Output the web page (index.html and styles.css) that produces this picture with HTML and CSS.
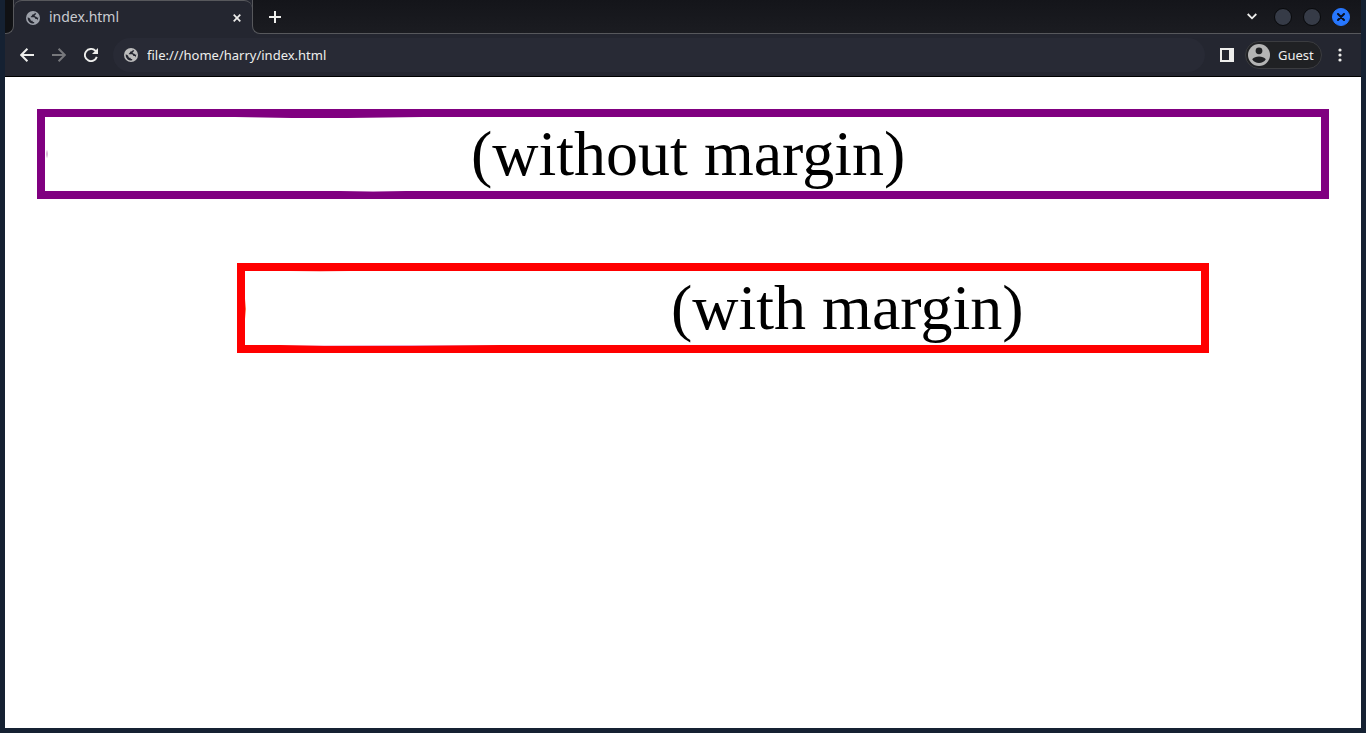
FILE: index.html
```html
<!DOCTYPE html>
<html lang="en">
<head>
<meta charset="utf-8">
<title>index.html</title>
<link rel="stylesheet" href="styles.css">
</head>
<body>
<svg class="defs" aria-hidden="true">
  <symbol id="globe" viewBox="0 0 14 14">
    <circle cx="7" cy="7" r="7" fill="currentColor"/>
    <path class="ocean" d="M8.6 1.7C8.9 2.5 8.5 3 7.8 3.2L6.6 3.5C5.9 3.8 6.2 4.6 5.6 4.9C5 5.2 4.7 5.4 4.8 6.2H7.8C8.9 6.2 9.2 7 9.3 7.9H10.6C11.4 8 11.4 9 10.8 9.9A5.4 5.4 0 0 0 12.4 6.6C11.7 6.9 10.8 6.6 10.4 5.8C9.2 5.9 8.5 5.1 8.8 4.1C9.8 4 9.9 3.2 10.2 2.6A5.4 5.4 0 0 0 8.6 1.7zM1.6 6.6A5.4 5.4 0 0 0 8.2 12.3V11C7.1 11.2 6.4 10.7 6.5 9.7H5.2C4.4 9.5 4.5 8.5 4.2 7.8C3.4 7 2.6 6.7 1.6 6.6z"/>
  </symbol>
</svg>
<div class="window">
  <header class="tabstrip">
    <div class="previous"></div>
    <div class="tab">
      <svg class="globe tab-globe"><use href="#globe"/></svg>
      <span class="tab-title">index.html</span>
      <button class="tab-close" aria-label="Close tab"><svg width="8" height="8" viewBox="0 0 8 8"><path d="M.7.7l6.6 6.6M7.3.7L.7 7.3" stroke="currentColor" stroke-width="1.7"/></svg></button>
    </div>
    <div class="strip-rest">
      <button class="new-tab" aria-label="New tab"><svg width="12" height="12" viewBox="0 0 12 12"><path d="M6 0v12M0 6h12" stroke="currentColor" stroke-width="2"/></svg></button>
      <button class="search-tabs" aria-label="Search tabs"><svg width="10" height="7" viewBox="0 0 10 7"><path d="M.7 1L5 5.3 9.3 1" fill="none" stroke="currentColor" stroke-width="1.8"/></svg></button>
      <button class="control" aria-label="Minimize"></button>
      <button class="control" aria-label="Maximize"></button>
      <button class="control close" aria-label="Close window"><svg width="8" height="8" viewBox="0 0 8 8"><path d="M1 1l6 6M7 1L1 7" stroke="currentColor" stroke-width="2" stroke-linecap="round"/></svg></button>
    </div>
  </header>
  <nav class="toolbar" aria-label="Browser toolbar">
    <button class="nav-button" aria-label="Back"><svg width="14" height="14" viewBox="0 0 14 14"><path d="M14 7H1.5M7.4.8L1.2 7l6.2 6.2" fill="none" stroke="currentColor" stroke-width="2"/></svg></button>
    <button class="nav-button disabled" aria-label="Forward"><svg width="14" height="14" viewBox="0 0 14 14"><path d="M0 7h12.5M6.6.8L12.8 7l-6.2 6.2" fill="none" stroke="currentColor" stroke-width="2"/></svg></button>
    <button class="nav-button" aria-label="Reload"><svg width="14" height="14" viewBox="0 0 14 14"><path d="M12.8 8.9A6.1 6.1 0 1 1 11.3 2.7L12 3.4" fill="none" stroke="currentColor" stroke-width="1.9"/><path d="M14 0v6H8z" fill="currentColor"/></svg></button>
    <label class="address"><svg class="globe"><use href="#globe"/></svg><input type="text" aria-label="Address" value="file:///home/harry/index.html"></label>
    <button class="side-panel" aria-label="Side panel"><svg width="14" height="14" viewBox="0 0 14 14"><path fill="currentColor" fill-rule="evenodd" d="M0 0h14v14H0zM2 2v10h7V2z"/></svg></button>
    <button class="profile"><svg width="22" height="22" viewBox="0 0 22 22"><circle cx="11" cy="11" r="11" fill="#b4b4b4"/><circle cx="11" cy="6.8" r="3.4" fill="#202124"/><path d="M4.2 15.3C5.7 13.4 8.3 12.5 11 12.5s5.3.9 6.8 2.8A8.3 8.3 0 0 1 11 19.1a8.3 8.3 0 0 1-6.8-3.8z" fill="#202124"/></svg><span>Guest</span></button>
    <button class="menu" aria-label="Menu"><svg width="4" height="14" viewBox="0 0 4 14" fill="currentColor"><circle cx="2" cy="2" r="1.6"/><circle cx="2" cy="7" r="1.6"/><circle cx="2" cy="12" r="1.6"/></svg></button>
  </nav>
  <main class="page">
    <div class="box plain">(without margin)</div>
    <div class="box spaced">(with margin)</div>
  </main>
</div>
</body>
</html>
```

FILE: styles.css
```css
* { box-sizing: border-box; }
body { margin: 0; background: #152132; }
button { border: 0; padding: 0; margin: 0; background: none; color: inherit; font: inherit; }
svg { display: block; flex: none; }
.defs { position: absolute; width: 0; height: 0; }
.ocean { fill: #242630; }
.window {
  display: flex;
  flex-direction: column;
  min-height: 100vh;
  padding: 0 5px 5px;
  font-family: "Noto Sans", sans-serif;
  color: #eeeeec;
}
.tabstrip { display: flex; height: 34px; background: #242630; }
.previous {
  width: 9px;
  background: #101114;
  border: solid #57585c;
  border-width: 0 1px 1px 0;
  border-bottom-right-radius: 8px;
}
.tab {
  display: flex;
  align-items: center;
  width: 238px;
  padding: 0 11px 0 12px;
  border-top: 1px solid #57585c;
  border-top-left-radius: 8px;
  border-top-right-radius: 8px;
  background: #242630;
}
.globe { width: 14px; height: 14px; color: #bdbdbd; }
.tab-globe { color: #9da1aa; }
.tab-title { flex: 1; margin-left: 9px; padding-bottom: 2px; font-size: 14px; line-height: 20px; color: #c9cbd0; }
.strip-rest {
  flex: 1;
  display: flex;
  align-items: center;
  padding: 0 11px 0 16px;
  border: solid #57585c;
  border-width: 0 0 1px 1px;
  border-bottom-left-radius: 8px;
  background: linear-gradient(#14151a, #1b1c21);
}
.search-tabs { margin: 0 17px 0 auto; }
.control {
  display: grid;
  place-items: center;
  width: 18px;
  height: 18px;
  margin-right: 11px;
  border: 1px solid #08090b;
  border-radius: 50%;
  background: #363b47;
}
.control.close { margin-right: 0; border-color: #2777ff; background: #2777ff; color: #0a1020; }
.toolbar {
  display: flex;
  align-items: center;
  height: 43px;
  padding: 0 19px 0 15px;
  border-bottom: 1px solid #000;
  background: #242630;
}
.nav-button { margin-right: 18px; }
.disabled { color: #77787c; }
.address {
  flex: 1;
  display: flex;
  align-items: center;
  gap: 9px;
  height: 34px;
  margin-right: 15px;
  padding-left: 11px;
  margin-left: -3px;
  border-radius: 17px;
  background: #282a35;
}
.address input {
  flex: 1;
  min-width: 0;
  padding: 0;
  border: 0;
  outline: 0;
  background: none;
  color: #eeeeec;
  font: 13px/20px "Noto Sans", sans-serif;
}
.profile {
  display: flex;
  align-items: center;
  gap: 8px;
  height: 28px;
  margin: 0 16px 0 11px;
  padding: 0 8px 0 2px;
  border: 1px solid #3b3c40;
  border-radius: 14px;
  background: #202124;
  font-size: 13px;
}
.profile span { width: 35px; }
.page {
  flex: 1;
  padding: 32px;
  background: #fff;
  color: #000;
  font: 64px/74px "Liberation Serif", serif;
}
.box { position: relative; padding-left: 426px; border: 8px solid #800080; }
.box::before, .box::after { content: ""; position: absolute; height: 1px; }
.plain {
  background: radial-gradient(ellipse, #b070b0, transparent 70%) 1px 32px / 2px 10px no-repeat;
}
.plain::before { top: 0; left: 190px; width: 188px; background: linear-gradient(90deg, transparent, #800080 30%, #800080 60%, transparent); }
.plain::after { top: 74px; left: 295px; width: 66px; background: linear-gradient(90deg, transparent, #c98bc9, transparent); }
.spaced {
  margin: 64px 120px 0 200px;
  border-color: #f00;
  background: linear-gradient(transparent, #ff6a40, transparent) 0 28px / 1px 20px no-repeat;
}
.spaced::before { top: 0; left: 45px; width: 60px; background: linear-gradient(90deg, transparent, #ffc0c0, transparent); }
.spaced::after { top: 74px; left: 35px; width: 220px; background: linear-gradient(90deg, transparent, #f4c6dc 20%, #e8a0c8 60%, transparent); }
```
